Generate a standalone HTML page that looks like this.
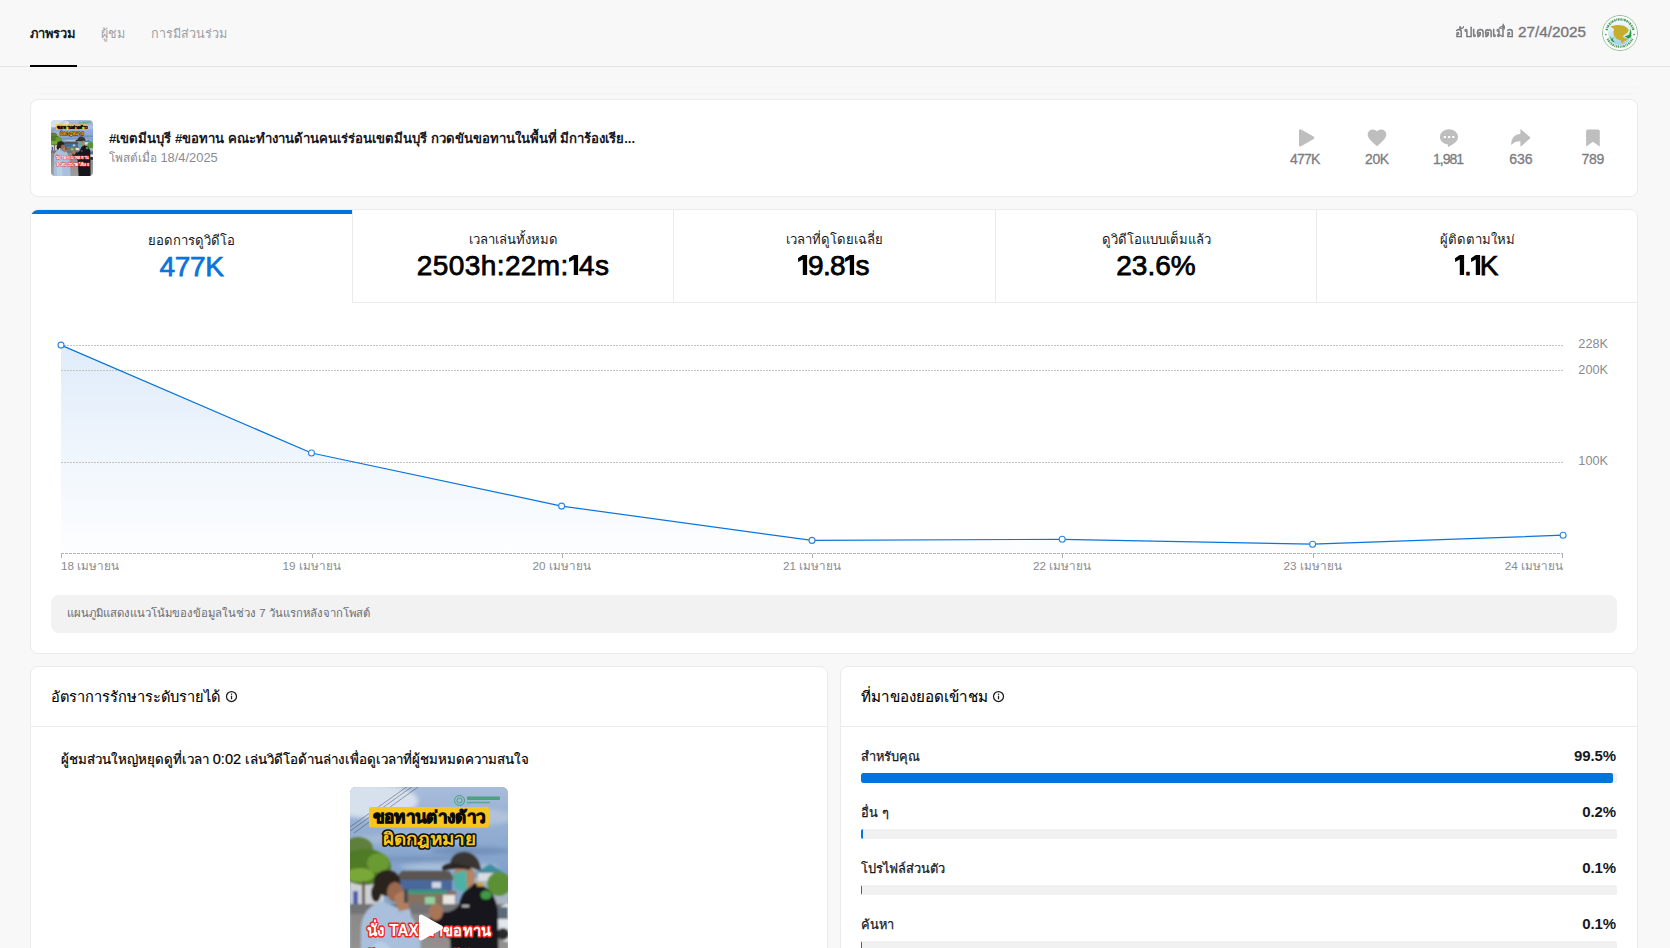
<!DOCTYPE html>
<html lang="th">
<head>
<meta charset="utf-8">
<title>Analytics</title>
<style>
*{box-sizing:border-box;margin:0;padding:0}
html,body{width:1670px;height:948px;overflow:hidden;background:#f8f8f8;font-family:"Liberation Sans",sans-serif;color:#000}
body{position:relative}
.abs{position:absolute}
/* top nav */
#nav{position:absolute;left:0;top:0;width:1670px;height:67px;border-bottom:1px solid #e6e6e6;background:#f8f8f8}
#nav .tab{position:absolute;top:1px;height:66px;line-height:66px;font-size:12.6px;color:#a0a0a4;white-space:nowrap}
#nav .tab.on{color:#161823;font-weight:bold;font-size:12.9px}
#nav .ul{position:absolute;left:30px;top:65px;width:47px;height:2px;background:#000}
#upd{position:absolute;right:84px;top:0;height:64px;line-height:64px;font-size:14.4px;color:#75767b;white-space:nowrap;-webkit-text-stroke:0.35px #75767b}
#ava{position:absolute;left:1602px;top:15px;width:36px;height:36px;border-radius:50%;overflow:hidden}
/* cards */
.card{position:absolute;background:#fff;border:1px solid #ebebeb;border-radius:8px}
#c1{left:30px;top:99px;width:1608px;height:98px}
#c2{left:30px;top:209px;width:1608px;height:445px}
#c3{left:30px;top:666px;width:798px;height:300px}
#c4{left:840px;top:666px;width:798px;height:300px}
#thumb{position:absolute;left:51px;top:120px;width:42px;height:56px;border-radius:4px;overflow:hidden}
#title{position:absolute;left:109px;top:129px;font-size:13.15px;font-weight:bold;line-height:20px;white-space:nowrap;color:#161823}
#sub{position:absolute;left:109px;top:149px;font-size:12.35px;line-height:18px;color:#8a8b91;white-space:nowrap}
.stat{position:absolute;top:126px;width:72px;text-align:center}
.stat svg{display:block;margin:0 auto;width:22px;height:22px}
.stat .n{font-size:14px;line-height:18px;color:#7c7d82;margin-top:2px;-webkit-text-stroke:0.3px #7c7d82}
/* metric tabs */
.mt{position:absolute;top:210px;height:93px;text-align:center;border-left:1px solid #ebebeb;border-bottom:1px solid #ebebeb;background:#fff}
.mt.on{border-left:none;border-bottom:none;border-top-left-radius:7px;overflow:hidden}
.mt.on::before{content:"";position:absolute;left:0;right:0;top:0;height:4px;background:#0074db}
.mt .l{position:absolute;left:0;right:0;top:20px;font-size:13.1px;line-height:20px;color:#161823}
.mt .v{position:absolute;left:0;right:0;top:38px;font-size:28px;line-height:36px;font-weight:normal;color:#000;-webkit-text-stroke:0.75px #000;letter-spacing:0.05px}
.mt.on .l{top:21px}
.mt.on .v{top:39px;color:#0a74db;-webkit-text-stroke:0.75px #0a74db}
#note{position:absolute;left:51px;top:595px;width:1566px;height:38px;border-radius:8px;background:#f2f2f2;font-size:11.35px;line-height:36px;color:#6b6c72;padding-left:16px}
.hd{position:absolute;font-size:16px;line-height:24px;color:#000;white-space:nowrap;-webkit-text-stroke:0.1px #000}
.hr{position:absolute;height:1px;background:#ebebeb}
.row{position:absolute;left:861px;width:756px}
.row .l{position:absolute;left:0;top:1px;font-size:12.8px;-webkit-text-stroke:0.25px #161823;line-height:20px;color:#161823;white-space:nowrap}
.row .p{position:absolute;right:1px;top:0;font-size:15px;line-height:20px;font-weight:bold;color:#161823;letter-spacing:-0.1px}
.row .b{position:absolute;left:0;top:27px;width:756px;height:10px;border-radius:2px;background:#f1f1f2;overflow:hidden}
.row .b i{display:block;height:10px;background:#0075dc;border-radius:2px}
.xl{font-family:"Liberation Sans",sans-serif;font-size:11.7px;fill:#8a8b91}
.yl{font-family:"Liberation Sans",sans-serif;font-size:12.7px;fill:#8a8b91}
.cap1{font-family:"Liberation Sans",sans-serif;font-weight:bold;font-size:16.5px;fill:#0b0b0b;stroke:#0b0b0b;stroke-width:.9px}
.cap2{font-family:"Liberation Sans",sans-serif;font-weight:bold;font-size:17px;fill:#fac51c;stroke:#0b0b0b;stroke-width:3px;paint-order:stroke fill;stroke-linejoin:round}
.cap3{font-family:"Liberation Sans",sans-serif;font-weight:bold;font-size:16px;fill:#fff;stroke:#f0251f;stroke-width:2.8px;paint-order:stroke fill;stroke-linejoin:round}
.sn{position:absolute;top:149px;height:20px;line-height:20px;font-size:14px;color:#7b7c81;-webkit-text-stroke:0.3px #7b7c81;white-space:nowrap}
.one{display:inline-block;width:9.1px;height:19.9px;vertical-align:baseline;fill:#000;overflow:visible}
</style>
</head>
<body>
<svg width="0" height="0" style="position:absolute">
<defs>
<linearGradient id="sky" x1="0" y1="0" x2="0" y2="1"><stop offset="0" stop-color="#a8bcda"/><stop offset="0.45" stop-color="#8eaad0"/><stop offset="0.75" stop-color="#7f9fc9"/><stop offset="1" stop-color="#86a6cb"/></linearGradient>
<linearGradient id="road" x1="0" y1="0" x2="0" y2="1"><stop offset="0" stop-color="#8b8987"/><stop offset="1" stop-color="#a19f9d"/></linearGradient>
<filter id="bl" x="-5%" y="-5%" width="110%" height="110%"><feGaussianBlur stdDeviation="0.9"/></filter>
<filter id="bl2" x="-5%" y="-5%" width="110%" height="110%"><feGaussianBlur stdDeviation="2.2"/></filter>

</defs>
</svg>

<div id="nav">
  <div class="tab on" style="left:30px">ภาพรวม</div>
  <div class="tab" style="left:101px">ผู้ชม</div>
  <div class="tab" style="left:151px">การมีส่วนร่วม</div>
  <div class="ul"></div>
  <div id="upd"><span style="font-size:13px;display:inline-block;transform:scaleX(1.03);transform-origin:right center">อัปเดตเมื่อ</span> <span style="font-size:15.3px">27/4/2025</span></div>
  <div id="ava"><svg width="36" height="36" viewBox="0 0 36 36">
<defs><linearGradient id="avg" x1="0" y1="0" x2="0" y2="1"><stop offset="0" stop-color="#f4f9fd"/><stop offset="0.55" stop-color="#cfe6f6"/><stop offset="1" stop-color="#9fd0f0"/></linearGradient></defs>
<circle cx="18" cy="18" r="17.600" fill="#fdfefd" stroke="#5da566" stroke-width=".7"/>
<path d="M4.600 15.200 A13.700 13.700 0 0 1 31.400 15.200" fill="none" stroke="#2f8844" stroke-width="2.400" stroke-dasharray="1.500 .700 .900 .600 1.800 .800" opacity=".85"/><path d="M5.600 23.800 A13.700 13.700 0 0 0 30.400 23.800" fill="none" stroke="#2f8844" stroke-width="2.400" stroke-dasharray="1.200 .600 1.700 .700 .800 .600" opacity=".8"/><circle cx="3.900" cy="19.600" r=".8" fill="#2f8844"/><circle cx="32.100" cy="19.600" r=".8" fill="#2f8844"/>
<circle cx="18" cy="18" r="12" fill="url(#avg)"/>
<path d="M8.200 11.800 Q14 9 20.500 10.600 Q25.500 12 26.800 15.300 Q25.500 18.500 22.500 19.600 L20.600 21.400 L22.800 23.300 L26 23.500 Q25 26 22 26.200 L20.200 29 L18.800 25.500 Q13.500 24.500 11.800 20 Q10.800 16.500 12.200 14 Z" fill="#c7ad2c"/>
<path d="M7.600 20.600 L9.600 26.300 L13.200 27.600 L11 25 L11.600 21.800 L9.900 24 Z" fill="#2f9a3f"/>
<path d="M28.600 13.800 L27.200 19.800 L22.800 21.600 L26.400 23.600 L29.200 22 L29.200 17.500 Z" fill="#239a35"/>
</svg></div>
</div>

<div class="abs" style="left:36px;top:87px;width:1601px;height:1px;background:#f5f5f5"></div><div class="abs" style="left:36px;top:93px;width:1601px;height:1px;background:#f4f4f4"></div>
<div class="card" id="c1"></div>
<div id="thumb"><svg width="42" height="56" viewBox="0 2.6 158 210.7" preserveAspectRatio="none" style="display:block">
<rect x="0" y="0" width="158" height="120" fill="url(#sky)"/>
<g filter="url(#bl2)">
<ellipse cx="20" cy="14" rx="48" ry="17" fill="#dde5ef" opacity=".9"/>
<ellipse cx="118" cy="30" rx="46" ry="9" fill="#b7c7dc" opacity=".8"/>
<ellipse cx="60" cy="52" rx="60" ry="6" fill="#aabdd6" opacity=".7"/>
<ellipse cx="120" cy="64" rx="40" ry="4" fill="#5f7ea8" opacity=".55"/><ellipse cx="70" cy="72" rx="50" ry="3" fill="#5f7ea8" opacity=".4"/><ellipse cx="100" cy="80" rx="50" ry="4" fill="#c3d2e4" opacity=".6"/>
</g>
<g stroke="#3b4557" stroke-width=".6" opacity=".8"><line x1="0" y1="40" x2="58" y2="-1"/><line x1="0" y1="44" x2="63" y2="-1"/><line x1="4" y1="46" x2="68" y2="0"/></g>
<g filter="url(#bl)">
<rect x="0" y="92" width="34" height="26" fill="#cdd1d5"/>
<rect x="118" y="90" width="40" height="28" fill="#aab5c2"/>
<polygon points="126,86 140,77 154,86" fill="#3c8e9b"/>
<rect x="128" y="86" width="26" height="8" fill="#d9dde2"/>
<ellipse cx="149" cy="97" rx="12" ry="12" fill="#5b9034"/>
<polygon points="44,93 52,84 99,84 105,93" fill="#5a5451"/>
<rect x="50" y="93" width="52" height="11" fill="#49699c"/>
<rect x="82" y="95" width="9" height="6" fill="#cfd7e2"/>
<rect x="48" y="104" width="58" height="14" fill="#86705f"/>
<rect x="58" y="103" width="38" height="4" fill="#3c9878"/>
<rect x="75" y="110" width="10" height="7" fill="#8fd3a0"/>
<rect x="93" y="108" width="12" height="9" fill="#e8e6e2"/>
<ellipse cx="8" cy="62" rx="15" ry="12" fill="#5f7f3c"/>
<ellipse cx="15" cy="80" rx="26" ry="18" fill="#4f7a27"/>
<ellipse cx="28" cy="76" rx="11" ry="10" fill="#6a9a30"/><ellipse cx="10" cy="88" rx="14" ry="7" fill="#7aa838"/>
<rect x="12" y="94" width="3" height="24" fill="#6a5944"/>
<rect x="3" y="104" width="5" height="13" fill="#4a5fb0"/>
<rect x="0" y="117" width="158" height="11" fill="#737375"/>
<rect x="0" y="127" width="158" height="90" fill="url(#road)"/>
<ellipse cx="158" cy="136" rx="14" ry="19" fill="#e3e7ed"/>
<rect x="146" y="120" width="12" height="12" fill="#5d6a78"/>
<circle cx="153" cy="147" r="6" fill="#2a2a2d"/>
<!-- woman -->
<path d="M10 214 L11 140 Q13 120 32 114 L50 122 Q66 128 70 150 L74 214 Z" fill="#a9bfdb"/>
<path d="M22 214 L22 160 Q30 150 40 160 L44 214Z" fill="#b9cde6"/>
<ellipse cx="37" cy="96" rx="13.500" ry="13" fill="#2a211f"/>
<ellipse cx="26" cy="106" rx="5" ry="9" fill="#2a211f"/>
<ellipse cx="45" cy="105" rx="8" ry="10" fill="#9a694e"/>
<path d="M44 110 Q52 100 57 108 L60 126 Q54 132 49 124 Z" fill="#b17e60"/>
<rect x="54" y="102" width="4" height="14" rx="1" fill="#4a4a4c"/>
<path d="M50 124 L60 122 L66 160 L54 150Z" fill="#a9bfdb"/>
<!-- officer -->
<path d="M104 214 L100 152 Q88 142 79 133 L83 122 Q100 130 109 118 Q113 101 125 96 Q147 101 148 127 L149 214 Z" fill="#14161d"/>
<ellipse cx="114" cy="90" rx="11" ry="12.500" fill="#b38465"/>
<path d="M103 87 L116 83 L117 103 Q110 106 105 101 Z" fill="#4db1a5"/>
<path d="M100 80 Q100 66 114 65 Q129 66 131 84 L120 80 Z" fill="#393433"/><path d="M92 80 Q96 76 104 76 L121 80 L120 83 Q104 80 93 84 Z" fill="#2b2726"/>
<ellipse cx="86" cy="125" rx="7" ry="8.500" fill="#a87657"/>
<ellipse cx="136" cy="108" rx="5.500" ry="4.500" fill="#3f9a45"/>
<rect x="127" y="95" width="6" height="4.500" fill="#c9a63a"/>
<rect x="112" y="118" width="7" height="2.200" fill="#b9b9bb"/>
</g>
<!-- logo -->
<g fill="none" stroke="#2f9a62" stroke-width=".8"><circle cx="109.500" cy="13.500" r="5"/><circle cx="109.500" cy="13.500" r="2.600"/></g>
<rect x="117" y="9.500" width="33" height="3.600" rx="1" fill="#2f9a62" opacity=".75"/>
<rect x="117" y="14.800" width="23" height="1.500" fill="#2f9a62" opacity=".6"/>
<!-- captions -->
<rect x="19" y="20" width="120" height="20.500" rx="2.200" fill="#fac51c"/>
<text x="79" y="36.400" text-anchor="middle" class="cap1" textLength="113" lengthAdjust="spacingAndGlyphs">ขอทานต่างด้าว</text>
<text x="79.500" y="57.600" text-anchor="middle" class="cap2" textLength="93" lengthAdjust="spacingAndGlyphs">ผิดกฎหมาย</text>
<text x="17" y="149.400" class="cap3" textLength="56" lengthAdjust="spacingAndGlyphs">นั่ง TAXI</text>
<text x="141" y="149.400" text-anchor="end" class="cap3" textLength="66" lengthAdjust="spacingAndGlyphs">มาขอทาน</text>
<text x="79" y="176" text-anchor="middle" class="cap3" textLength="124" lengthAdjust="spacingAndGlyphs">โดนจับปรับ ผิดได้เลย</text>
</svg></div>
<div id="title">#เขตมีนบุรี #ขอทาน คณะทำงานด้านคนเร่ร่อนเขตมีนบุรี กวดขันขอทานในพื้นที่ มีการ้องเรีย...</div>
<div id="sub"><span style="font-size:11.9px">โพสต์เมื่อ</span> <span style="font-size:12.9px">18/4/2025</span></div>

<svg class="abs" style="left:1280px;top:120px" width="340" height="36" viewBox="1280 120 340 36">
<g fill="#bebebe">
<path d="M1300.400 130.600 L1312.900 137.800 L1300.400 145 Z" stroke="#bebebe" stroke-width="2.800" stroke-linejoin="round"/>
<path transform="translate(1367.700 129.600) scale(0.93 0.905) translate(-2 -3)" d="M12 21.350l-1.450-1.320C5.400 15.360 2 12.280 2 8.500 2 5.420 4.420 3 7.500 3c1.740 0 3.410.810 4.500 2.090C13.090 3.810 14.760 3 16.500 3 19.580 3 22 5.420 22 8.500c0 3.780-3.400 6.860-8.550 11.540L12 21.350z"/>
<ellipse cx="1448.950" cy="136.900" rx="9.100" ry="7.700"/>
<path d="M1447.700 142 L1447.900 146.500 Q1448 147.100 1448.700 146.800 Q1453.500 144.800 1456 141 Z"/>
<path d="M1520.400 129.900 Q1520.400 128.700 1521.300 129.500 L1529.900 137.100 Q1530.600 137.800 1529.900 138.500 L1521.300 146.300 Q1520.400 147.100 1520.400 145.900 L1520.400 141.300 C1516.600 141.200 1514 142.200 1512 144.600 Q1511.200 145.400 1511.200 144 C1511.300 138.600 1514.600 134.300 1520.400 133.700 Z"/>
<path d="M1586.100 131.200 Q1586.100 129.400 1587.900 129.400 L1598 129.400 Q1599.800 129.400 1599.800 131.200 L1599.800 145.600 Q1599.800 146.600 1598.900 146 L1593 141.700 L1587 146 Q1586.100 146.600 1586.100 145.600 Z"/>
</g>
<g fill="#fff"><rect x="1443.800" y="135.900" width="2.200" height="2.200" rx=".5"/><rect x="1448" y="135.900" width="2.200" height="2.200" rx=".5"/><rect x="1452.100" y="135.900" width="2.200" height="2.200" rx=".5"/></g>
</svg>
<div class="sn" style="left:1290px;letter-spacing:-0.8px">477K</div>
<div class="sn" style="left:1364.900px;letter-spacing:-0.3px">20K</div>
<div class="sn" style="left:1433px;letter-spacing:-1.0px">1,981</div>
<div class="sn" style="left:1509.200px">636</div>
<div class="sn" style="left:1581.600px;letter-spacing:-0.35px">789</div>
<div class="card" id="c2"></div>
<div class="mt on" style="left:31px;width:321px"><div class="l">ยอดการดูวิดีโอ</div><div class="v" style="letter-spacing:-0.3px">477K</div></div>
<div class="mt" style="left:352px;width:321px"><div class="l">เวลาเล่นทั้งหมด</div><div class="v"><span style="letter-spacing:0.42px">2503h:22m:</span><svg class="one" viewBox="0 0 9.100 19.900"><path d="M4.800 0 L9.100 0 L9.100 19.900 L4.800 19.900 L4.800 4.500 L0.200 6.900 L0 3.200 Z"/></svg><span style="margin-left:1.2px;letter-spacing:0.3px">4s</span></div></div>
<div class="mt" style="left:673px;width:322px"><div class="l">เวลาที่ดูโดยเฉลี่ย</div><div class="v"><svg class="one" viewBox="0 0 9.100 19.900"><path d="M4.800 0 L9.100 0 L9.100 19.900 L4.800 19.900 L4.800 4.500 L0.200 6.900 L0 3.200 Z"/></svg><span style="letter-spacing:-0.7px;margin-left:1.2px">9.8</span><svg class="one" viewBox="0 0 9.100 19.900"><path d="M4.800 0 L9.100 0 L9.100 19.900 L4.800 19.900 L4.800 4.500 L0.200 6.900 L0 3.200 Z"/></svg><span style="margin-left:1.6px;margin-right:1.6px">s</span></div></div>
<div class="mt" style="left:995px;width:321px"><div class="l">ดูวิดีโอแบบเต็มแล้ว</div><div class="v">23.6%</div></div>
<div class="mt" style="left:1316px;width:321px;border-top-right-radius:7px"><div class="l">ผู้ติดตามใหม่</div><div class="v"><svg class="one" viewBox="0 0 9.100 19.900"><path d="M4.800 0 L9.100 0 L9.100 19.900 L4.800 19.900 L4.800 4.500 L0.200 6.900 L0 3.200 Z"/></svg><span style="margin-left:-0.6px;letter-spacing:-1.2px">.</span><svg class="one" viewBox="0 0 9.100 19.900"><path d="M4.800 0 L9.100 0 L9.100 19.900 L4.800 19.900 L4.800 4.500 L0.200 6.900 L0 3.200 Z"/></svg><span style="margin-left:0.2px">K</span></div></div>

<svg id="chart" class="abs" style="left:0;top:320px" width="1670" height="270" viewBox="0 320 1670 270">
<defs><linearGradient id="ag" x1="0" y1="345" x2="0" y2="553" gradientUnits="userSpaceOnUse"><stop offset="0" stop-color="#dfecfa"/><stop offset="0.45" stop-color="#edf4fc"/><stop offset="1" stop-color="#fdfeff"/></linearGradient></defs>
<path d="M61 345.1 L311.5 453 L561.6 506.1 L812 540.4 L1062.2 539.3 L1312.6 544.2 L1563.1 535.2 L1563.1 553 L61 553 Z" fill="url(#ag)"/>
<line x1="61" y1="345.5" x2="1563" y2="345.5" stroke="#c4c4c6" stroke-width="1" stroke-dasharray="2 1"/>
<line x1="61" y1="370.5" x2="1563" y2="370.5" stroke="#c4c4c6" stroke-width="1" stroke-dasharray="2 1"/>
<line x1="61" y1="462.5" x2="1563" y2="462.5" stroke="#c4c4c6" stroke-width="1" stroke-dasharray="2 1"/>
<line x1="61" y1="553.5" x2="1563" y2="553.5" stroke="#b4b4b7" stroke-width="1" stroke-dasharray="3 1"/>
<line x1="61.5" y1="554" x2="61.5" y2="558" stroke="#b0b0b3" stroke-width="1"/>
<line x1="312.5" y1="554" x2="312.5" y2="558" stroke="#b0b0b3" stroke-width="1"/>
<line x1="562.5" y1="554" x2="562.5" y2="558" stroke="#b0b0b3" stroke-width="1"/>
<line x1="812.5" y1="554" x2="812.5" y2="558" stroke="#b0b0b3" stroke-width="1"/>
<line x1="1062.5" y1="554" x2="1062.5" y2="558" stroke="#b0b0b3" stroke-width="1"/>
<line x1="1313.5" y1="554" x2="1313.5" y2="558" stroke="#b0b0b3" stroke-width="1"/>
<line x1="1562.5" y1="554" x2="1562.5" y2="558" stroke="#b0b0b3" stroke-width="1"/>
<path d="M61 345.1 L311.5 453 L561.6 506.1 L812 540.4 L1062.2 539.3 L1312.6 544.2 L1563.1 535.2" fill="none" stroke="#0a74db" stroke-width="1.2" stroke-linejoin="round"/>
<circle cx="61" cy="345.1" r="3" fill="#fff" stroke="#2b85e0" stroke-width="1.1"/>
<circle cx="311.5" cy="453" r="3" fill="#fff" stroke="#2b85e0" stroke-width="1.1"/>
<circle cx="561.6" cy="506.1" r="3" fill="#fff" stroke="#2b85e0" stroke-width="1.1"/>
<circle cx="812" cy="540.4" r="3" fill="#fff" stroke="#2b85e0" stroke-width="1.1"/>
<circle cx="1062.2" cy="539.3" r="3" fill="#fff" stroke="#2b85e0" stroke-width="1.1"/>
<circle cx="1312.6" cy="544.2" r="3" fill="#fff" stroke="#2b85e0" stroke-width="1.1"/>
<circle cx="1563.1" cy="535.2" r="3" fill="#fff" stroke="#2b85e0" stroke-width="1.1"/>
<text x="61" y="570" text-anchor="start" class="xl">18 เมษายน</text>
<text x="311.5" y="570" text-anchor="middle" class="xl">19 เมษายน</text>
<text x="561.6" y="570" text-anchor="middle" class="xl">20 เมษายน</text>
<text x="812" y="570" text-anchor="middle" class="xl">21 เมษายน</text>
<text x="1062.2" y="570" text-anchor="middle" class="xl">22 เมษายน</text>
<text x="1312.6" y="570" text-anchor="middle" class="xl">23 เมษายน</text>
<text x="1563" y="570" text-anchor="end" class="xl">24 เมษายน</text>
<text x="1608" y="348" text-anchor="end" class="yl">228K</text>
<text x="1608" y="374" text-anchor="end" class="yl">200K</text>
<text x="1608" y="465" text-anchor="end" class="yl">100K</text>
</svg>
<div id="note">แผนภูมิแสดงแนวโน้มของข้อมูลในช่วง 7 วันแรกหลังจากโพสต์</div>

<div class="card" id="c3"></div>
<div class="hd" style="left:51px;top:685px;font-size:14.6px">อัตราการรักษาระดับรายได้</div>
<svg class="abs" style="left:224.5px;top:690px" width="13" height="13" viewBox="0 0 13 13"><circle cx="6.500" cy="6.500" r="5" fill="none" stroke="#1c1c1c" stroke-width="1.250"/><rect x="5.900" y="5.700" width="1.250" height="3.600" fill="#1c1c1c"/><rect x="5.900" y="3.600" width="1.250" height="1.250" fill="#1c1c1c"/></svg>
<div class="hr" style="left:31px;top:726px;width:796px"></div>
<div class="abs" style="left:61px;top:748.5px;font-size:13.35px;line-height:20px;white-space:nowrap;color:#000;-webkit-text-stroke:0.2px #000">ผู้ชมส่วนใหญ่หยุดดูที่เวลา <span style="font-size:14.6px">0:02</span> เล่นวิดีโอด้านล่างเพื่อดูเวลาที่ผู้ชมหมดความสนใจ</div>
<div id="vid" class="abs" style="left:350px;top:787px;width:158px;height:214px;border-radius:6px;overflow:hidden;background:#9fb4cc"><svg width="158" height="214" viewBox="0 0 158 214" style="display:block">
<rect x="0" y="0" width="158" height="120" fill="url(#sky)"/>
<g filter="url(#bl2)">
<ellipse cx="20" cy="14" rx="48" ry="17" fill="#dde5ef" opacity=".9"/>
<ellipse cx="118" cy="30" rx="46" ry="9" fill="#b7c7dc" opacity=".8"/>
<ellipse cx="60" cy="52" rx="60" ry="6" fill="#aabdd6" opacity=".7"/>
<ellipse cx="120" cy="64" rx="40" ry="4" fill="#5f7ea8" opacity=".55"/><ellipse cx="70" cy="72" rx="50" ry="3" fill="#5f7ea8" opacity=".4"/><ellipse cx="100" cy="80" rx="50" ry="4" fill="#c3d2e4" opacity=".6"/>
</g>
<g stroke="#3b4557" stroke-width=".6" opacity=".8"><line x1="0" y1="40" x2="58" y2="-1"/><line x1="0" y1="44" x2="63" y2="-1"/><line x1="4" y1="46" x2="68" y2="0"/></g>
<g filter="url(#bl)">
<rect x="0" y="92" width="34" height="26" fill="#cdd1d5"/>
<rect x="118" y="90" width="40" height="28" fill="#aab5c2"/>
<polygon points="126,86 140,77 154,86" fill="#3c8e9b"/>
<rect x="128" y="86" width="26" height="8" fill="#d9dde2"/>
<ellipse cx="149" cy="97" rx="12" ry="12" fill="#5b9034"/>
<polygon points="44,93 52,84 99,84 105,93" fill="#5a5451"/>
<rect x="50" y="93" width="52" height="11" fill="#49699c"/>
<rect x="82" y="95" width="9" height="6" fill="#cfd7e2"/>
<rect x="48" y="104" width="58" height="14" fill="#86705f"/>
<rect x="58" y="103" width="38" height="4" fill="#3c9878"/>
<rect x="75" y="110" width="10" height="7" fill="#8fd3a0"/>
<rect x="93" y="108" width="12" height="9" fill="#e8e6e2"/>
<ellipse cx="8" cy="62" rx="15" ry="12" fill="#5f7f3c"/>
<ellipse cx="15" cy="80" rx="26" ry="18" fill="#4f7a27"/>
<ellipse cx="28" cy="76" rx="11" ry="10" fill="#6a9a30"/><ellipse cx="10" cy="88" rx="14" ry="7" fill="#7aa838"/>
<rect x="12" y="94" width="3" height="24" fill="#6a5944"/>
<rect x="3" y="104" width="5" height="13" fill="#4a5fb0"/>
<rect x="0" y="117" width="158" height="11" fill="#737375"/>
<rect x="0" y="127" width="158" height="90" fill="url(#road)"/>
<ellipse cx="158" cy="136" rx="14" ry="19" fill="#e3e7ed"/>
<rect x="146" y="120" width="12" height="12" fill="#5d6a78"/>
<circle cx="153" cy="147" r="6" fill="#2a2a2d"/>
<!-- woman -->
<path d="M10 214 L11 140 Q13 120 32 114 L50 122 Q66 128 70 150 L74 214 Z" fill="#a9bfdb"/>
<path d="M22 214 L22 160 Q30 150 40 160 L44 214Z" fill="#b9cde6"/>
<ellipse cx="37" cy="96" rx="13.500" ry="13" fill="#2a211f"/>
<ellipse cx="26" cy="106" rx="5" ry="9" fill="#2a211f"/>
<ellipse cx="45" cy="105" rx="8" ry="10" fill="#9a694e"/>
<path d="M44 110 Q52 100 57 108 L60 126 Q54 132 49 124 Z" fill="#b17e60"/>
<rect x="54" y="102" width="4" height="14" rx="1" fill="#4a4a4c"/>
<path d="M50 124 L60 122 L66 160 L54 150Z" fill="#a9bfdb"/>
<!-- officer -->
<path d="M104 214 L100 152 Q88 142 79 133 L83 122 Q100 130 109 118 Q113 101 125 96 Q147 101 148 127 L149 214 Z" fill="#14161d"/>
<ellipse cx="114" cy="90" rx="11" ry="12.500" fill="#b38465"/>
<path d="M103 87 L116 83 L117 103 Q110 106 105 101 Z" fill="#4db1a5"/>
<path d="M100 80 Q100 66 114 65 Q129 66 131 84 L120 80 Z" fill="#393433"/><path d="M92 80 Q96 76 104 76 L121 80 L120 83 Q104 80 93 84 Z" fill="#2b2726"/>
<ellipse cx="86" cy="125" rx="7" ry="8.500" fill="#a87657"/>
<ellipse cx="136" cy="108" rx="5.500" ry="4.500" fill="#3f9a45"/>
<rect x="127" y="95" width="6" height="4.500" fill="#c9a63a"/>
<rect x="112" y="118" width="7" height="2.200" fill="#b9b9bb"/>
</g>
<!-- logo -->
<g fill="none" stroke="#2f9a62" stroke-width=".8"><circle cx="109.500" cy="13.500" r="5"/><circle cx="109.500" cy="13.500" r="2.600"/></g>
<rect x="117" y="9.500" width="33" height="3.600" rx="1" fill="#2f9a62" opacity=".75"/>
<rect x="117" y="14.800" width="23" height="1.500" fill="#2f9a62" opacity=".6"/>
<!-- captions -->
<rect x="19" y="20" width="120" height="20.500" rx="2.200" fill="#fac51c"/>
<text x="79" y="36.400" text-anchor="middle" class="cap1" textLength="113" lengthAdjust="spacingAndGlyphs">ขอทานต่างด้าว</text>
<text x="79.500" y="57.600" text-anchor="middle" class="cap2" textLength="93" lengthAdjust="spacingAndGlyphs">ผิดกฎหมาย</text>
<text x="17" y="149.400" class="cap3" textLength="56" lengthAdjust="spacingAndGlyphs">นั่ง TAXI</text>
<text x="141" y="149.400" text-anchor="end" class="cap3" textLength="66" lengthAdjust="spacingAndGlyphs">มาขอทาน</text>
<text x="79" y="176" text-anchor="middle" class="cap3" textLength="124" lengthAdjust="spacingAndGlyphs">โดนจับปรับ ผิดได้เลย</text>
<path d="M71 129.500 L91 140.500 L71 151.500 Z" fill="#fff" stroke="#fff" stroke-width="4" stroke-linejoin="round"/></svg></div>

<div class="card" id="c4"></div>
<div class="hd" style="left:861px;top:685px;font-size:15.2px">ที่มาของยอดเข้าชม</div>
<svg class="abs" style="left:992.0px;top:690px" width="13" height="13" viewBox="0 0 13 13"><circle cx="6.500" cy="6.500" r="5" fill="none" stroke="#1c1c1c" stroke-width="1.250"/><rect x="5.900" y="5.700" width="1.250" height="3.600" fill="#1c1c1c"/><rect x="5.900" y="3.600" width="1.250" height="1.250" fill="#1c1c1c"/></svg>
<div class="hr" style="left:841px;top:726px;width:796px"></div>
<div class="row" style="top:746px"><div class="l">สำหรับคุณ</div><div class="p">99.5%</div><div class="b"><i style="width:752px"></i></div></div>
<div class="row" style="top:802px"><div class="l">อื่น ๆ</div><div class="p">0.2%</div><div class="b"><i style="width:2px"></i></div></div>
<div class="row" style="top:858px"><div class="l">โปรไฟล์ส่วนตัว</div><div class="p">0.1%</div><div class="b"><i style="width:1px"></i></div></div>
<div class="row" style="top:914px"><div class="l">ค้นหา</div><div class="p">0.1%</div><div class="b"><i style="width:1px"></i></div></div>
</body>
</html>
